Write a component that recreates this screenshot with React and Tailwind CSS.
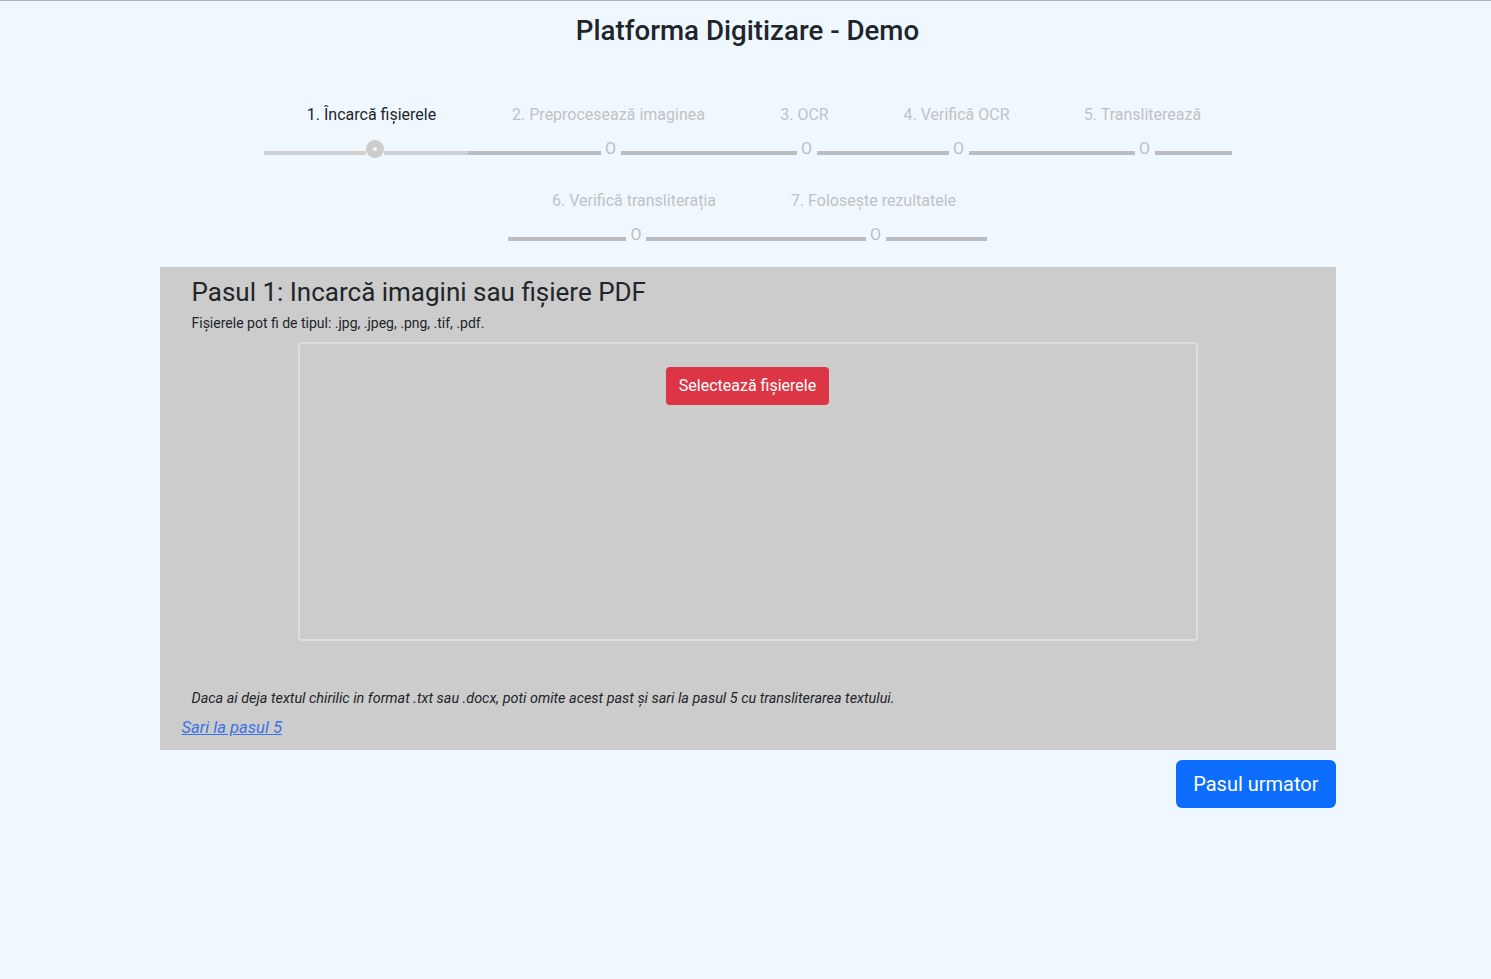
import React from 'react';

const steps = [
  { label: '1. Încarcă fișierele', width: 'w-[204px]', active: true },
  { label: '2. Preprocesează imaginea', width: 'w-[286px]' },
  { label: '3. OCR', width: 'w-[106px]' },
  { label: '4. Verifică OCR', width: 'w-[198px]' },
  { label: '5. Transliterează', width: 'w-[174px]' },
  { label: '6. Verifică transliterația', width: 'w-[256px]' },
  { label: '7. Folosește rezultatele', width: 'w-[223px]' },
];

function Step({ step }) {
  return (
    <div className={`${step.width} flex flex-col pt-[13px] pb-[15px]`}>
      <div
        className={`text-center text-[16px] leading-[24px] whitespace-nowrap ${
          step.active ? 'text-[#212529] pl-[12px]' : 'text-[#c2c2c2] pr-[4px]'
        }`}
      >
        {step.label}
      </div>
      {step.active ? (
        <div className="mt-[14px] h-[20px] flex items-start">
          <div className="w-[102px] h-[4px] mt-[10px] bg-[#cfcfcf]" />
          <div className="w-[18px] h-[18px] -mt-[1px] rounded-full bg-[#cccccc] flex items-center justify-center">
            <div className="w-[4px] h-[4px] rounded-full bg-[#f2f2f2]" />
          </div>
          <div className="flex-1 h-[4px] mt-[10px] bg-[#cfcfcf]" />
        </div>
      ) : (
        <div className="mt-[14px] h-[20px] flex items-start">
          <div className="flex-1 h-[4px] mt-[10px] bg-[#bdbdbd]" />
          <div className="w-[20px] -mt-[2px] text-center text-[16px] leading-[20px] text-[#bdbdbd]">O</div>
          <div className="flex-1 h-[4px] mt-[10px] bg-[#bdbdbd]" />
        </div>
      )}
    </div>
  );
}

export default function App() {
  return (
    <div className="min-h-screen bg-[#f0f8ff] border-t border-[#a9b1bb] pl-[4px] font-['Roboto',sans-serif] text-[#212529]">
      {/* Header */}
      <h1 className="pt-[13px] text-center text-[27.7px] leading-[34px] font-medium">
        Platforma Digitizare - Demo
      </h1>

      {/* Stepper */}
      <div className="w-[1176px] mx-auto mt-[42px] flex flex-wrap justify-center">
        {steps.map((s) => (
          <Step key={s.label} step={s} />
        ))}
      </div>

      {/* Step card */}
      <div className="w-[1176px] mx-auto mt-[5px] bg-[#cccccc] pt-[10px] pb-[10px]">
        <h2 className="pl-[32px] text-[26px] leading-[31px] text-[#212529]">
          Pasul 1: Incarcă imagini sau fișiere PDF
        </h2>
        <p className="mt-[5px] pl-[32px] text-[14px] leading-[21px]">
          Fișierele pot fi de tipul: .jpg, .jpeg, .png, .tif, .pdf.
        </p>

        <div className="mt-[8px] mx-auto w-[900px] h-[299px] border-2 border-[#dedede] rounded-[4px] flex flex-col items-center">
          <button className="mt-[23px] bg-[#dc3545] text-white text-[16px] leading-[24px] px-[13px] py-[7px] rounded-[4px]">
            Selectează fișierele
          </button>
        </div>

        <p className="mt-[47px] pl-[32px] text-[14.4px] leading-[21px] italic">
          Daca ai deja textul chirilic in format .txt sau .docx, poti omite acest past și sari la pasul 5 cu transliterarea textului.
        </p>
        <a href="#" className="block pl-[22px] mt-[7px] text-[16.6px] leading-[24px] italic underline text-[#3a72e8]">
          Sari la pasul 5
        </a>
      </div>

      <div className="w-[1176px] mx-auto mt-[10px] flex justify-end">
        <button className="bg-[#0d6efd] text-white text-[20px] leading-[30px] px-[17px] py-[9px] rounded-[6px]">
          Pasul urmator
        </button>
      </div>
    </div>
  );
}
